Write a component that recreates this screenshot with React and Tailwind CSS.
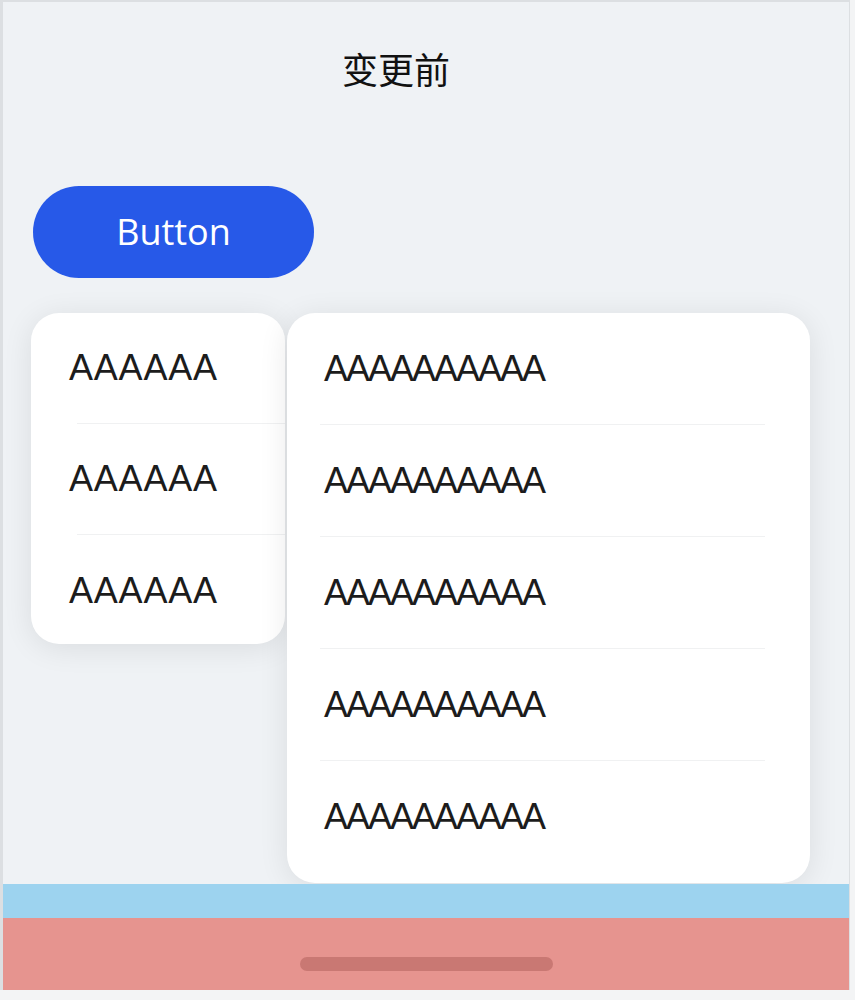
export default function App() {
  const left = ["AAAAAA", "AAAAAA", "AAAAAA"];
  const right = ["AAAAAAAAAA", "AAAAAAAAAA", "AAAAAAAAAA", "AAAAAAAAAA", "AAAAAAAAAA"];

  return (
    <div className="w-[855px] h-[1000px] bg-[#f3f4f5] overflow-hidden">
      <div className="w-[850px] h-[990px] flex flex-col bg-[#eff2f5] border-l-[3px] border-t-2 border-r border-[#dcdfe2]">

        {/* Title */}
        <div
          className="pt-[46px] pl-[339px] leading-[40px] text-[36px] text-[#111]"
          style={{ fontFamily: '"Noto Sans CJK SC", "Noto Sans", sans-serif' }}
        >
          变更前
        </div>

        {/* Button */}
        <div className="mt-[98px] pl-[30px]">
          <button
            className="w-[281px] h-[92px] rounded-full bg-[#2759e8] text-white text-[36px] leading-none flex items-center justify-center"
            style={{ fontFamily: '"Open Sans", sans-serif' }}
          >
            Button
          </button>
        </div>

        {/* Menus */}
        <div
          className="mt-[35px] pl-[28px] flex items-start gap-[2px] text-[36px] text-[#1c1c1c]"
          style={{ fontFamily: '"Liberation Sans", Arial, sans-serif' }}
        >
          <div className="w-[254px] h-[331px] bg-white rounded-[28px] shadow-[0_4px_30px_rgba(0,0,0,0.09)] overflow-hidden">
            {left.map((t, i) => (
              <div key={i} className="h-[111px] flex flex-col">
                <div className="flex-1 flex items-center pl-[38px] tracking-[0.8px]">{t}</div>
                {i < left.length - 1 && <div className="ml-[46px] h-px bg-[#f0f1f2]" />}
              </div>
            ))}
          </div>

          <div className="w-[523px] h-[570px] bg-white rounded-[28px] shadow-[0_4px_30px_rgba(0,0,0,0.09)] overflow-hidden">
            {right.map((t, i) => (
              <div key={i} className="h-[112px] flex flex-col">
                <div className="flex-1 flex items-center pl-[37px] tracking-[-2px]">{t}</div>
                {i < right.length - 1 && <div className="ml-[33px] mr-[45px] h-px bg-[#f0f1f2]" />}
              </div>
            ))}
          </div>
        </div>

        {/* Bottom bars */}
        <div className="mt-auto h-[34px] bg-[#9dd3ef]" />
        <div className="h-[72px] bg-[#e6948f] flex items-start pt-[39px] pl-[297px]">
          <div className="w-[253px] h-[14px] rounded-full bg-[#c97873]" />
        </div>
      </div>
    </div>
  );
}
